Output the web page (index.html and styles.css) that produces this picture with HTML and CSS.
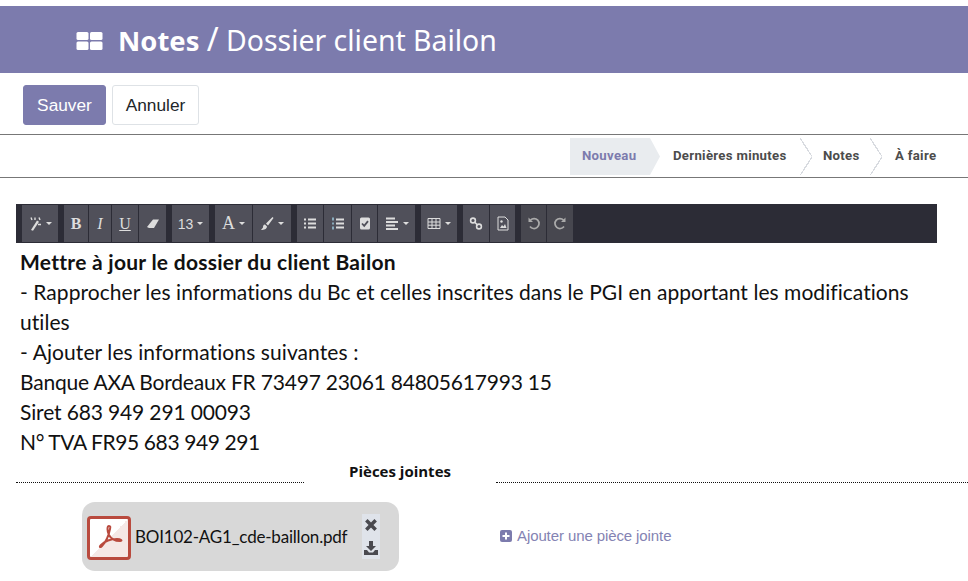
FILE: index.html
```html
<!DOCTYPE html>
<html lang="fr">
<head>
<meta charset="utf-8">
<title>Notes</title>
<link rel="stylesheet" href="styles.css">
</head>
<body>
<header class="topbar">
  <svg class="app-icon" viewBox="0 0 26 18"><rect x="0" y="0" width="12" height="8" rx="1.5"/><rect x="13.500" y="0" width="12.500" height="8" rx="1.5"/><rect x="0" y="9.500" width="12" height="8.500" rx="1.5"/><rect x="13.500" y="9.500" width="12.500" height="8.500" rx="1.5"/></svg>
  <h1 class="crumbs"><b>Notes</b> <span class="slash">/</span> Dossier client Bailon</h1>
</header>
<div class="actions">
  <button class="btn btn-primary">Sauver</button>
  <button class="btn btn-plain">Annuler</button>
</div>
<nav class="statusbar">
  <span class="stage stage-active">Nouveau</span>
  <span class="stage stage-second">Dernières minutes</span>
  <span class="stage stage-third">Notes</span>
  <span class="stage stage-last">À faire</span>
</nav>
<main class="content">
  <div class="toolbar">
    <div class="tgroup">
      <span class="tbtn w36"><svg class="ti" viewBox="0 0 14 14"><path d="M3 13.500 9 4l2 1.200-6 9z" fill="#ddd"/><path d="M3 1l1 2.500M7 1v2.500M11 1l1 2.500M10 8h3" stroke="#ddd" stroke-width="1.400" fill="none"/></svg><i class="caret"></i></span>
    </div>
    <div class="tgroup">
      <span class="tbtn w24 serif"><b>B</b></span>
      <span class="tbtn w22 serif"><em>I</em></span>
      <span class="tbtn w26 serif"><u>U</u></span>
      <span class="tbtn w27"><svg class="ti" viewBox="0 0 14 14"><path d="M1 10.500 7 3h6l-5 8.500H3z" fill="#ddd"/></svg></span>
    </div>
    <div class="tgroup">
      <span class="tbtn w37 num">13<i class="caret"></i></span>
    </div>
    <div class="tgroup">
      <span class="tbtn w37 serif big">A<i class="caret"></i></span>
      <span class="tbtn w38"><svg class="ti" viewBox="0 0 14 14"><path d="M12.500 .500 6 7l2 2 5.500-7.500zM5 8c-2 0-2 2-2 3l-2 2.500c3 0 6-1 6-3.500z" fill="#ddd"/></svg><i class="caret"></i></span>
    </div>
    <div class="tgroup">
      <span class="tbtn w26"><svg class="ti" viewBox="0 0 14 14"><path d="M1 2h2v2H1zM1 6h2v2H1zM1 10h2v2H1zM5 2h8v2H5zM5 6h8v2H5zM5 10h8v2H5z" fill="#ddd"/></svg></span>
      <span class="tbtn w27"><svg class="ti" viewBox="0 0 14 14"><path d="M5 2h8v2H5zM5 6h8v2H5zM5 10h8v2H5z" fill="#ddd"/><path d="M1 1h2v3H1zM1 6h2v2H1zM1 10h2v3H1z" fill="#8ab"/></svg></span>
      <span class="tbtn w25"><svg class="ti" viewBox="0 0 14 14"><rect x="2" y="1" width="10" height="12" rx="1.5" fill="#ddd"/><path d="M4 7l2.200 2.400L10 4.600" stroke="#50505a" stroke-width="1.800" fill="none"/></svg></span>
      <span class="tbtn w37"><svg class="ti" viewBox="0 0 14 14"><path d="M1 1h9v2H1zM1 4.500h12v2H1zM1 8h9v2H1zM1 11.500h12v2H1z" fill="#ddd"/></svg><i class="caret"></i></span>
    </div>
    <div class="tgroup">
      <span class="tbtn w36"><svg class="ti" viewBox="0 0 14 14"><path d="M1 2h12v10H1zM1 5.500h12M1 8.700h12M5 2v10M9 2v10" stroke="#ddd" fill="none"/></svg><i class="caret"></i></span>
    </div>
    <div class="tgroup">
      <span class="tbtn w26"><svg class="ti" viewBox="0 0 14 14"><circle cx="4" cy="4" r="2.400" stroke="#ddd" stroke-width="1.600" fill="none"/><circle cx="10" cy="10" r="2.400" stroke="#ddd" stroke-width="1.600" fill="none"/><path d="M5.500 5.500l3 3" stroke="#ddd" stroke-width="1.600"/></svg></span>
      <span class="tbtn w25"><svg class="ti" viewBox="0 0 14 14"><path d="M2 .5h7l3 3v10H2z" stroke="#ddd" fill="none"/><path d="M4 11.500l2-3 1.500 1.500L9 7.500l1.500 4z" fill="#ddd"/><circle cx="5.500" cy="5" r="1.200" fill="#ddd"/></svg></span>
    </div>
    <div class="tgroup">
      <span class="tbtn w25 muted"><svg class="ti" viewBox="0 0 14 14"><path d="M3.500 3.500A5 5 0 1 1 3 10" stroke="#aaa" stroke-width="1.700" fill="none"/><path d="M1.500 1v4.500h4.500z" fill="#aaa"/></svg></span>
      <span class="tbtn w26 muted"><svg class="ti" viewBox="0 0 14 14"><path d="M10.500 3.500A5 5 0 1 0 11 10" stroke="#aaa" stroke-width="1.700" fill="none"/><path d="M12.500 1v4.500H8z" fill="#aaa"/></svg></span>
    </div>
  </div>
  <div class="note">
    <p class="l1"><strong>Mettre à jour le dossier du client Bailon</strong></p>
    <p class="l2">- Rapprocher les informations du Bc et celles inscrites dans le PGI en apportant les modifications utiles</p>
    <p class="l3">- Ajouter les informations suivantes :</p>
    <p class="l4">Banque AXA Bordeaux FR 73497 23061 84805617993 15</p>
    <p class="l5">Siret 683 949 291 00093</p>
    <p class="l6">N° TVA FR95 683 949 291</p>
  </div>
  <div class="separator">
    <span class="dots"></span>
    <span class="sep-title">Pièces jointes</span>
    <span class="dots"></span>
  </div>
  <div class="attachments">
    <div class="file">
      <span class="pdf"><svg viewBox="0 0 38 38"><path d="M19 7c-2 0-2 5 0 9 2 4 5 6 11 6 3 0 1-2-3-2-6 0-12 2-16 6-2 2-1 3 1 1 4-4 7-12 8-17 .5-2 .5-3-1-3z" stroke="#b94a3e" stroke-width="2" fill="none"/></svg></span>
      <span class="file-name">BOI102-AG1_cde-baillon.pdf</span>
      <span class="file-tools">
        <svg viewBox="0 0 12 12"><path d="M2 2l8 8M10 2l-8 8" stroke="#4a4a50" stroke-width="3"/></svg>
        <svg viewBox="0 0 14 14"><path d="M5 0h4v5h3L7 10 2 5h3zM0 9h3l2 2.500h4L11 9h3v5H0z" fill="#4a4a50"/></svg>
      </span>
    </div>
    <a class="add-file"><svg viewBox="0 0 12 12"><rect width="12" height="12" rx="2" fill="#7c7bad"/><path d="M5 2.500h2V5h2.500v2H7v2.500H5V7H2.500V5H5z" fill="#fff"/></svg>Ajouter une pièce jointe</a>
  </div>
</main>
</body>
</html>
```
FILE: styles.css
```css
* { box-sizing: border-box; }
html, body { margin: 0; padding: 0; }
body { width: 968px; height: 581px; overflow: hidden; background: #fff; padding-top: 6px; font-family: "Liberation Sans", Arial, sans-serif; }
.topbar { height: 67px; background: #7c7bad; display: flex; align-items: center; padding-left: 76px; color: #fff; }
.app-icon { width: 27px; height: 18px; fill: #fff; margin-right: 15px; margin-top: 3px; }
.crumbs { margin: 0 0 2px; font: 400 28.400px/1 "Noto Sans", sans-serif; white-space: nowrap; }
.crumbs b { font-weight: 700; font-size: 27.400px; }
.slash { font-size: 32px; line-height: 1; }
.actions { display: flex; gap: 6px; padding: 12px 0 9px 23px; }
.btn { height: 40px; border-radius: 3px; font: 17.300px "Liberation Sans", Arial, sans-serif; padding: 1px 0 0; }
.btn-primary { width: 83px; background: #7c7bad; border: 1px solid #7c7bad; color: #fff; }
.btn-plain { width: 87px; background: #fff; border: 1px solid #dee2e6; color: #212529; }
.statusbar { height: 44px; border-top: 1px solid #777; border-bottom: 1px solid #777; display: flex; padding: 3px 0 0 570px; font: 700 13.200px/36px Roboto, sans-serif; letter-spacing: .3px; color: #4c4c4c; }
.stage { position: relative; height: 37px; white-space: nowrap; }
.stage-active { width: 90px; background: #e9ecef; color: #7c7bad; padding-left: 12px; clip-path: polygon(0 0, 80px 0, 90px 50%, 80px 100%, 0 100%); }
.stage-second { width: 152px; padding-left: 13px; }
.stage-third { width: 70px; padding-left: 11px; }
.stage-last { padding-left: 13px; }
.stage-second::after, .stage-third::after { content: ""; position: absolute; right: 0; top: 0; width: 12px; height: 37px; background: linear-gradient(to top right, transparent 47%, #d8dbe0 47%, #d8dbe0 53%, transparent 53%) top / 100% 50% no-repeat, linear-gradient(to bottom right, transparent 47%, #d8dbe0 47%, #d8dbe0 53%, transparent 53%) bottom / 100% 50% no-repeat; }
.content { padding: 26px 0 0 16px; }
.toolbar { width: 921px; height: 39px; background: #2c2c36; display: flex; gap: 6px; padding: 1px 0 1px 6px; }
.tgroup { display: flex; gap: 1px; }
.tbtn { height: 37px; background: #50505a; color: #ddd; display: flex; align-items: center; justify-content: center; gap: 4px; font-size: 13px; }
.tbtn.muted { background: #47474f; }
.w22 { width: 22px; } .w24 { width: 24px; } .w25 { width: 25px; } .w26 { width: 26px; } .w27 { width: 27px; }
.w36 { width: 36px; } .w37 { width: 37px; } .w38 { width: 38px; }
.serif { font: 16px "Liberation Serif", serif; }
.serif.big { font-size: 18px; }
.num { font: 14px "Liberation Sans", sans-serif; }
.ti { width: 14px; height: 15px; }
.caret { width: 0; height: 0; border-left: 3px solid transparent; border-right: 3px solid transparent; border-top: 3px solid #ddd; }
.note { height: 217px; padding: 4px 20px 0 4px; font: 21px/30px Lato, "Noto Sans", sans-serif; color: #111; }
.note p { margin: 0; }
.l1 { letter-spacing: .27px; }
.l2 { letter-spacing: .05px; }
.l3 { letter-spacing: .09px; }
.l4 { letter-spacing: -.2px; }
.l5 { letter-spacing: -.14px; }
.l6 { letter-spacing: -.4px; }
.separator { display: flex; align-items: flex-start; height: 42px; }
.dots { width: 288px; height: 23px; border-bottom: 1px dotted #111; }
.dots:last-child { width: 472px; }
.sep-title { width: 192px; text-align: center; font: 700 15px/20px "Open Sans", sans-serif; color: #111; margin-top: 1px; }
.attachments { display: flex; align-items: center; padding: 0 0 0 66px; }
.file { width: 317px; height: 69px; border-radius: 13px; background: #d8d8d8; display: flex; align-items: center; padding-left: 5px; }
.pdf { width: 44px; height: 44px; margin-top: 2px; border: 3px solid #b94a3e; border-radius: 4px; background: linear-gradient(135deg, #fff 50%, #f5e8e6 50%); display: flex; }
.pdf svg { width: 100%; height: 100%; }
.file-name { font: 17px Lato, sans-serif; letter-spacing: -.2px; color: #111; margin-left: 4px; width: 227px; white-space: nowrap; }
.file-tools { width: 18px; height: 45px; background: #dfe3ea; display: flex; flex-direction: column; justify-content: space-between; align-items: center; padding: 4px 2px; }
.file-tools svg { width: 14px; height: 14px; }
.add-file { margin: 0 0 2px 101px; color: #8483b3; font-size: 15px; letter-spacing: -.1px; display: flex; align-items: center; gap: 5px; }
.add-file svg { width: 12px; height: 12px; }
```
